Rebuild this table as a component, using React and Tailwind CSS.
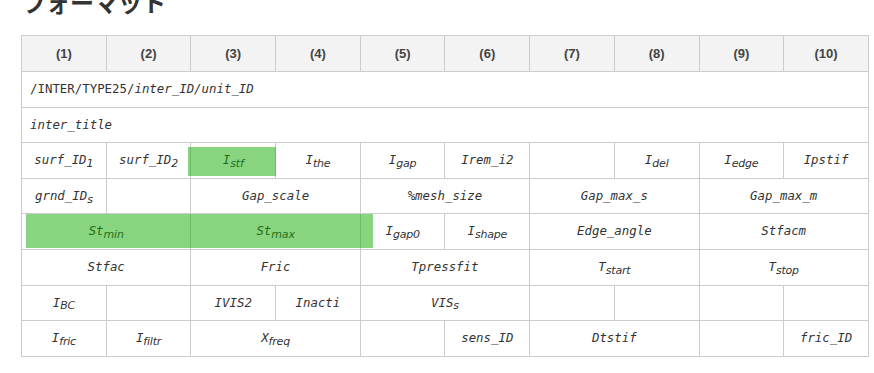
const mono = "font-['DejaVu_Sans_Mono','Liberation_Mono',monospace]";

function V({ t, s }) {
  return (
    <span className="italic">
      {t}
      {s && (
        <sub className="text-[11px] leading-none font-['DejaVu_Sans','Liberation_Sans',sans-serif] tracking-[-0.2px]">
          {s}
        </sub>
      )}
    </span>
  );
}

function Td({ span = 1, children, className = "" }) {
  return (
    <td colSpan={span} className={`border border-[#cccccc] text-center align-middle px-1 ${className}`}>
      {children}
    </td>
  );
}

export default function App() {
  const heads = ["(1)", "(2)", "(3)", "(4)", "(5)", "(6)", "(7)", "(8)", "(9)", "(10)"];
  const row = "h-[35.6px]";

  return (
    <div className="w-[874px] h-[373px] overflow-hidden bg-white">
      <h2 className="ml-[22px] -mt-[10px] h-[45px] text-[24px] leading-[24px] font-bold text-[#333333] font-['Noto_Sans_CJK_JP',sans-serif]">
        フォーマット
      </h2>

      <div className="relative ml-[21px] w-[847px]">
        <table className={`w-[847px] table-fixed border-collapse text-[12.4px] text-[#333333] ${mono}`}>
          <colgroup>
            {heads.map((h) => (
              <col key={h} className="w-[84.7px]" />
            ))}
          </colgroup>
          <thead>
            <tr className="h-[36px]">
              {heads.map((h) => (
                <th
                  key={h}
                  className="border border-[#cccccc] bg-[#f3f3f3] text-[13px] font-bold text-[#444444] font-['Liberation_Sans',Arial,sans-serif]"
                >
                  {h}
                </th>
              ))}
            </tr>
          </thead>
          <tbody>
            <tr className={row}>
              <td colSpan={10} className="border border-[#cccccc] pl-[8px] text-left">
                /INTER/TYPE25/<span className="italic">inter_ID/unit_ID</span>
              </td>
            </tr>
            <tr className={row}>
              <td colSpan={10} className="border border-[#cccccc] pl-[8px] text-left">
                <span className="italic">inter_title</span>
              </td>
            </tr>
            <tr className={row}>
              <Td><V t="surf_ID" s="1" /></Td>
              <Td><V t="surf_ID" s="2" /></Td>
              <Td><V t="I" s="stf" /></Td>
              <Td><V t="I" s="the" /></Td>
              <Td><V t="I" s="gap" /></Td>
              <Td><V t="Irem_i2" /></Td>
              <Td />
              <Td><V t="I" s="del" /></Td>
              <Td><V t="I" s="edge" /></Td>
              <Td><V t="Ipstif" /></Td>
            </tr>
            <tr className={row}>
              <Td><V t="grnd_ID" s="s" /></Td>
              <Td />
              <Td span={2}><V t="Gap_scale" /></Td>
              <Td span={2}><V t="%mesh_size" /></Td>
              <Td span={2}><V t="Gap_max_s" /></Td>
              <Td span={2}><V t="Gap_max_m" /></Td>
            </tr>
            <tr className={row}>
              <Td span={2}><V t="St" s="min" /></Td>
              <Td span={2}><V t="St" s="max" /></Td>
              <Td><V t="I" s="gap0" /></Td>
              <Td><V t="I" s="shape" /></Td>
              <Td span={2}><V t="Edge_angle" /></Td>
              <Td span={2}><V t="Stfacm" /></Td>
            </tr>
            <tr className={row}>
              <Td span={2}><V t="Stfac" /></Td>
              <Td span={2}><V t="Fric" /></Td>
              <Td span={2}><V t="Tpressfit" /></Td>
              <Td span={2}><V t="T" s="start" /></Td>
              <Td span={2}><V t="T" s="stop" /></Td>
            </tr>
            <tr className={row}>
              <Td><V t="I" s="BC" /></Td>
              <Td />
              <Td><V t="IVIS2" /></Td>
              <Td><V t="Inacti" /></Td>
              <Td span={2}><V t="VIS" s="s" /></Td>
              <Td />
              <Td />
              <Td />
              <Td />
            </tr>
            <tr className={row}>
              <Td><V t="I" s="fric" /></Td>
              <Td><V t="I" s="filtr" /></Td>
              <Td span={2}><V t="X" s="freq" /></Td>
              <Td />
              <Td><V t="sens_ID" /></Td>
              <Td span={2}><V t="Dtstif" /></Td>
              <Td />
              <Td><V t="fric_ID" /></Td>
            </tr>
          </tbody>
        </table>

        {/* highlight marks over the table */}
        <div className="pointer-events-none absolute left-[167px] top-[112px] w-[88px] h-[29px] bg-[rgba(17,169,0,0.5)]" />
        <div className="pointer-events-none absolute left-[5px] top-[179px] w-[347px] h-[34px] bg-[rgba(17,169,0,0.5)]" />
      </div>
    </div>
  );
}
